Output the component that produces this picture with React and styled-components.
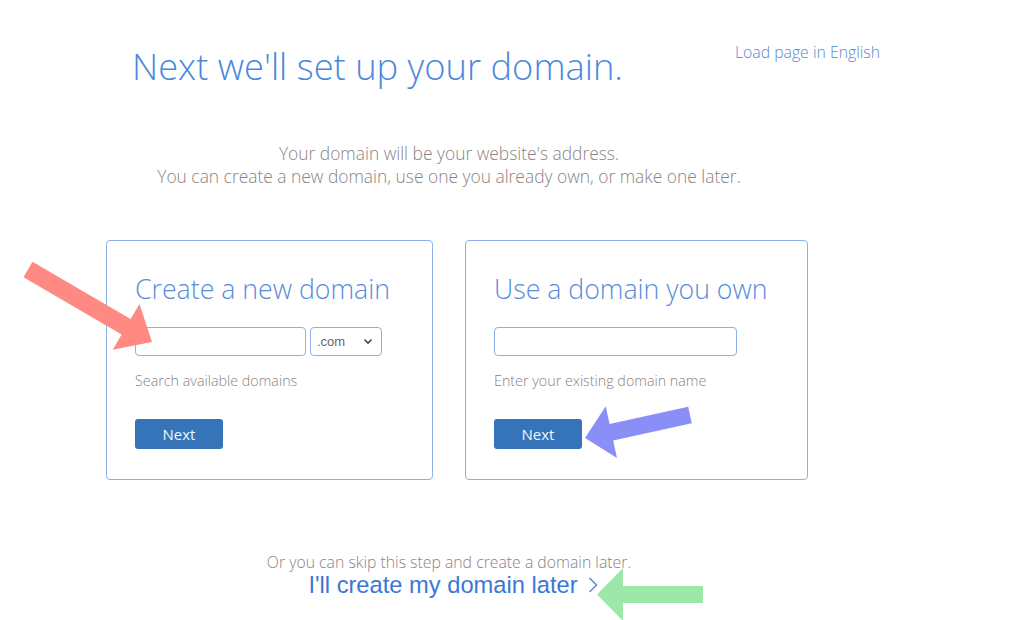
import React from 'react';
import styled, { createGlobalStyle } from 'styled-components';

const GlobalStyle = createGlobalStyle`
    html, body {
        margin: 0;
        padding: 0;
        background: #ffffff;
    }

    body {
        font-family: 'Open Sans', 'Noto Sans', sans-serif;
    }
`;

const Page = styled.div`
    position: relative;
    box-sizing: border-box;
    width: 1024px;
    height: 620px;
    overflow: hidden;
    padding: 45px 0 0 106px;
    background: #fff;
`;

const Header = styled.div`
    display: flex;
    justify-content: space-between;
    align-items: flex-start;
    width: 774px;
    padding-left: 26px;
    box-sizing: border-box;
`;

const Title = styled.h1`
    margin: 0;
    font-weight: 300;
    font-size: 36.3px;
    line-height: 43px;
    color: #4a88dc;
`;

const LangLink = styled.a`
    margin-top: -4px;
    font-size: 15.8px;
    font-weight: 300;
    line-height: 22px;
    color: #5b87d2;
    text-decoration: none;
`;

const Intro = styled.p`
    width: 686px;
    margin: 54px 0 0;
    text-align: center;
    font-size: 17.4px;
    font-weight: 300;
    line-height: 23px;
    color: #8a8384;
`;

const Cards = styled.div`
    display: flex;
    gap: 32px;
    margin-top: 52px;
`;

const Card = styled.div`
    box-sizing: border-box;
    width: ${props => props.$width}px;
    height: 240px;
    padding: 31px 20px 0 28px;
    border: 1px solid #8cb1ea;
    border-radius: 4px;
    display: flex;
    flex-direction: column;
    align-items: flex-start;
`;

const CardTitle = styled.h2`
    margin: 0;
    font-size: 26.7px;
    font-weight: 300;
    line-height: 34px;
    white-space: nowrap;
    color: #5a8cda;
`;

const FieldRow = styled.div`
    display: flex;
    gap: 4px;
    margin-top: 21px;
`;

const TextInput = styled.input`
    box-sizing: border-box;
    width: ${props => props.$width}px;
    height: 29px;
    margin: 0;
    padding: 0 8px;
    border: 1px solid #8cb1ea;
    border-radius: 4px;
    font-family: 'Open Sans', sans-serif;
    font-size: 14px;
    outline: none;
`;

const TldSelect = styled.div`
    box-sizing: border-box;
    width: 72px;
    height: 29px;
    padding: 0 8px 0 6px;
    border: 1px solid #8cb1ea;
    border-radius: 4px;
    display: flex;
    align-items: center;
    justify-content: space-between;
    font-family: 'Liberation Sans', Arial, sans-serif;
    font-size: 13px;
    color: #666;
`;

const Hint = styled.div`
    margin-top: 15px;
    font-size: 14.3px;
    font-weight: 300;
    line-height: 20px;
    color: #8a8384;
`;

const NextButton = styled.button`
    box-sizing: border-box;
    width: 88px;
    height: 30px;
    margin-top: 28px;
    border: none;
    border-radius: 3px;
    background: #3574b8;
    color: #f2f6fc;
    font-family: 'Open Sans', sans-serif;
    font-size: 15px;
    font-weight: 400;
    cursor: pointer;
`;

const Footer = styled.div`
    width: 686px;
    margin-top: 71px;
    display: flex;
    flex-direction: column;
    align-items: center;
`;

const SkipText = styled.div`
    font-size: 15.8px;
    font-weight: 300;
    line-height: 22px;
    color: #8a8384;
`;

const LaterLink = styled.a`
    margin-top: -1px;
    margin-left: 8px;
    display: flex;
    align-items: center;
    gap: 10px;
    font-family: 'Liberation Sans', Arial, sans-serif;
    font-size: 23.7px;
    line-height: 26px;
    color: #3b78d4;
    text-decoration: none;
`;

const Annotations = styled.svg`
    position: absolute;
    left: 0;
    top: 0;
    pointer-events: none;
`;

function arrowPoints(x0, y0, x1, y1, sw, hw, hl) {
    const dx = x1 - x0;
    const dy = y1 - y0;
    const len = Math.hypot(dx, dy);
    const ux = dx / len;
    const uy = dy / len;
    const nx = -uy;
    const ny = ux;
    const bx = x1 - ux * hl;
    const by = y1 - uy * hl;
    const pts = [
        [x0 + nx * sw, y0 + ny * sw],
        [bx + nx * sw, by + ny * sw],
        [bx + nx * hw, by + ny * hw],
        [x1, y1],
        [bx - nx * hw, by - ny * hw],
        [bx - nx * sw, by - ny * sw],
        [x0 - nx * sw, y0 - ny * sw],
    ];
    return pts.map(p => p.map(v => v.toFixed(1)).join(',')).join(' ');
}

const arrows = [
    { from: [28, 269.5], to: [152, 342], sw: 9, hw: 26.5, hl: 30, color: '#ff8a84' },
    { from: [690, 415], to: [585, 438], sw: 8.5, hw: 26.5, hl: 27, color: '#8a8ff8' },
    { from: [703, 594.5], to: [597, 594.5], sw: 8.5, hw: 26.5, hl: 26, color: '#9be8a9' },
];

export default function App() {
    return (
        <Page>
            <GlobalStyle />

            <Header>
                <Title>Next we'll set up your domain.</Title>
                <LangLink href="#">Load page in English</LangLink>
            </Header>

            <Intro>
                Your domain will be your website's address.
                <br />
                You can create a new domain, use one you already own, or make one later.
            </Intro>

            <Cards>
                <Card $width={327}>
                    <CardTitle>Create a new domain</CardTitle>
                    <FieldRow>
                        <TextInput $width={171} />
                        <TldSelect>
                            <span>.com</span>
                            <svg width="10" height="7" viewBox="0 0 10 7">
                                <path d="M1.5 1.5 L5 5 L8.5 1.5" fill="none" stroke="#444" strokeWidth="1.6" />
                            </svg>
                        </TldSelect>
                    </FieldRow>
                    <Hint>Search available domains</Hint>
                    <NextButton>Next</NextButton>
                </Card>

                <Card $width={343}>
                    <CardTitle>Use a domain you own</CardTitle>
                    <FieldRow>
                        <TextInput $width={243} />
                    </FieldRow>
                    <Hint>Enter your existing domain name</Hint>
                    <NextButton>Next</NextButton>
                </Card>
            </Cards>

            <Footer>
                <SkipText>Or you can skip this step and create a domain later.</SkipText>
                <LaterLink href="#">
                    I'll create my domain later
                    <svg width="10" height="16" viewBox="0 0 10 16">
                        <path d="M1.5 1 L8.5 8 L1.5 15" fill="none" stroke="#5a8cda" strokeWidth="1.5" />
                    </svg>
                </LaterLink>
            </Footer>

            <Annotations width="1024" height="620" viewBox="0 0 1024 620">
                {arrows.map((a, i) => (
                    <polygon
                        key={i}
                        points={arrowPoints(a.from[0], a.from[1], a.to[0], a.to[1], a.sw, a.hw, a.hl)}
                        fill={a.color}
                    />
                ))}
            </Annotations>
        </Page>
    );
}
